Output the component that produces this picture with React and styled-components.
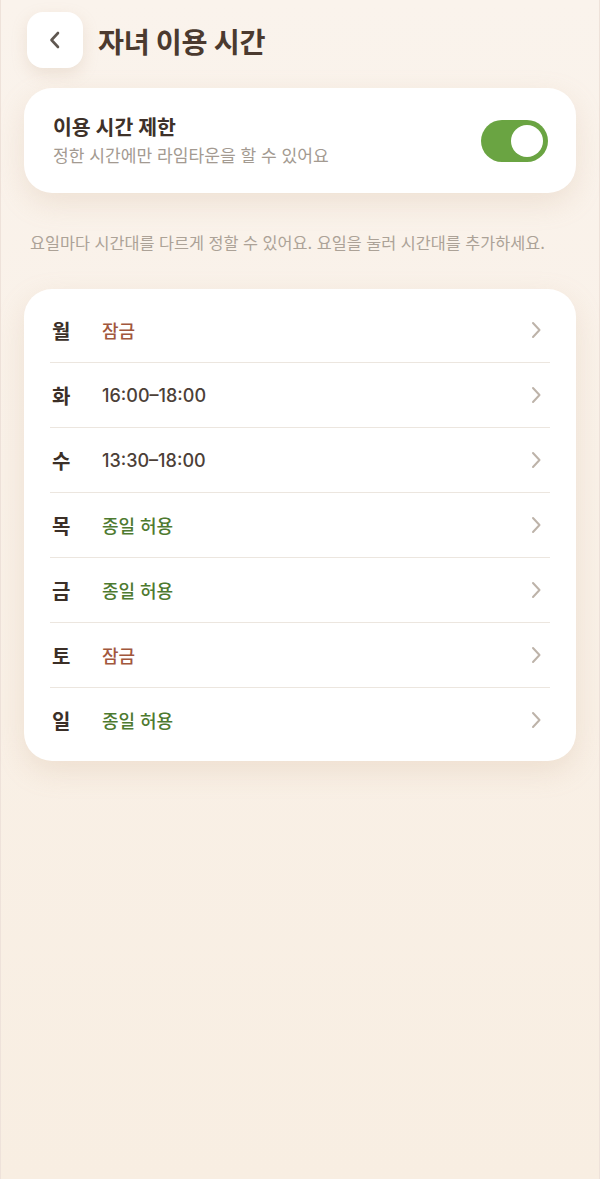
import React from 'react';
import styled, { createGlobalStyle } from 'styled-components';

const GlobalStyle = createGlobalStyle`
  html, body {
    margin: 0;
    padding: 0;
  }
  body {
    font-family: "Inter", "Noto Sans CJK KR", "Noto Sans", sans-serif;
    background: #f8eee2;
  }
`;

const Page = styled.div`
  box-sizing: border-box;
  min-height: 1179px;
  padding: 12px 23px 40px;
  background: linear-gradient(180deg, #faf3ec 0%, #f8eee2 100%);
  border-left: 1px solid #eee2da;
  border-right: 1px solid #eee2da;
`;

const Header = styled.div`
  display: flex;
  align-items: center;
  gap: 15px;
  margin-left: 3px;
`;

const BackButton = styled.button`
  width: 56px;
  height: 56px;
  border: none;
  border-radius: 16px;
  background: #ffffff;
  box-shadow: 0 6px 16px rgba(190, 160, 130, 0.22);
  display: flex;
  align-items: center;
  justify-content: center;
  padding: 0;
`;

const Title = styled.h1`
  margin: 0;
  font-size: 28.3px;
  font-weight: 700;
  color: #4b3a2f;
  letter-spacing: -0.3px;
`;

const Card = styled.div`
  background: #ffffff;
  border-radius: 28px;
  box-shadow: 0 10px 28px rgba(200, 165, 130, 0.22);
  margin-top: ${(p) => p.$top}px;
  padding: ${(p) => p.$pad};
`;

const ToggleRow = styled.div`
  display: flex;
  align-items: center;
  justify-content: space-between;
`;

const ToggleText = styled.div`
  display: flex;
  flex-direction: column;
  gap: 3px;
`;

const ToggleTitle = styled.div`
  font-size: 20.5px;
  font-weight: 700;
  color: #3e3129;
  line-height: 27px;
`;

const ToggleSub = styled.div`
  font-size: 17.1px;
  color: #a39a91;
  line-height: 23px;
`;

const Switch = styled.div`
  width: 67px;
  height: 42px;
  border-radius: 21px;
  background: #6aa442;
  display: flex;
  align-items: center;
  justify-content: flex-end;
  padding-right: 5px;
  box-sizing: border-box;
`;

const Knob = styled.div`
  width: 32px;
  height: 32px;
  border-radius: 50%;
  background: #ffffff;
`;

const Hint = styled.p`
  margin: 39px 0 0 6px;
  font-size: 16.3px;
  color: #aca297;
  line-height: 22px;
  white-space: nowrap;
`;

const DayRow = styled.div`
  display: flex;
  align-items: center;
  height: 64px;
  border-top: ${(p) => (p.$first ? 'none' : '1px solid #ece6df')};
`;

const Day = styled.span`
  width: 52px;
  font-size: 20px;
  font-weight: 700;
  color: #3b2f27;
  padding-left: 2px;
  box-sizing: border-box;
`;

const colors = {
  lock: '#a2573c',
  time: '#4c4037',
  all: '#4e7a30',
};

const Value = styled.span`
  flex: 1;
  font-size: 18px;
  font-weight: 500;
  color: ${(p) => colors[p.$kind]};
`;

const Chevron = styled.svg`
  margin-right: 8px;
`;

const days = [
  { day: '월', value: '잠금', kind: 'lock' },
  { day: '화', value: '16:00–18:00', kind: 'time' },
  { day: '수', value: '13:30–18:00', kind: 'time' },
  { day: '목', value: '종일 허용', kind: 'all' },
  { day: '금', value: '종일 허용', kind: 'all' },
  { day: '토', value: '잠금', kind: 'lock' },
  { day: '일', value: '종일 허용', kind: 'all' },
];

const App = () => {
  return (
    <>
      <GlobalStyle />
      <Page>
        <Header>
          <BackButton type="button">
            <svg width="14" height="20" viewBox="0 0 14 20" fill="none">
              <path d="M10 3 L3.5 10 L10 17" stroke="#5f5750" strokeWidth="2.6" strokeLinecap="round" strokeLinejoin="round" />
            </svg>
          </BackButton>
          <Title>자녀 이용 시간</Title>
        </Header>

        <Card $top={20} $pad="26px 28px 26px 29px">
          <ToggleRow>
            <ToggleText>
              <ToggleTitle>이용 시간 제한</ToggleTitle>
              <ToggleSub>정한 시간에만 라임타운을 할 수 있어요</ToggleSub>
            </ToggleText>
            <Switch>
              <Knob />
            </Switch>
          </ToggleRow>
        </Card>

        <Hint>요일마다 시간대를 다르게 정할 수 있어요. 요일을 눌러 시간대를 추가하세요.</Hint>

        <Card $top={35} $pad="9px 26px 9px 26px">
          {days.map((d, i) => (
            <DayRow key={d.day} $first={i === 0}>
              <Day>{d.day}</Day>
              <Value $kind={d.kind}>{d.value}</Value>
              <Chevron width="12" height="20" viewBox="0 0 12 20" fill="none">
                <path d="M3 3 L9.5 10 L3 17" stroke="#bdb3a9" strokeWidth="2" strokeLinecap="round" strokeLinejoin="round" />
              </Chevron>
            </DayRow>
          ))}
        </Card>
      </Page>
    </>
  );
};

export default App;
